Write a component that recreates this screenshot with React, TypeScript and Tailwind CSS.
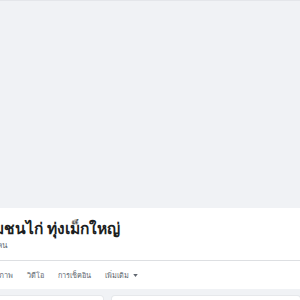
export default function App() {
  const tabs = [
    { label: 'รูปภาพ', cls: '-ml-[10px]' },
    { label: 'วิดีโอ', cls: '' },
    { label: 'การเช็คอิน', cls: '' },
  ];

  return (
    <div className="w-[300px] h-[300px] overflow-hidden bg-[#f0f2f5] font-['Noto_Sans','DejaVu_Sans',sans-serif]">
      {/* cover */}
      <div className="h-[208px] bg-[#f0f2f5] border-t border-[#e4e6ea]" />

      {/* header panel */}
      <div className="bg-white h-[81px] flex flex-col">
        <div className="h-[53px] pt-[9px] border-b border-[#dddfe2] whitespace-nowrap">
          <h1 className="-ml-[17px] text-[15.5px] leading-[23px] font-bold text-[#1c1e21]">
            ชุมชนไก่ ทุ่งเม็กใหญ่
          </h1>
          <p className="-ml-[57px] text-[8px] leading-[10px] text-[#606770]">
            ผู้ติดตาม 1,204 คน
          </p>
        </div>
        <div className="flex-1 flex items-center gap-[14px] text-[7.3px] text-[#606770] whitespace-nowrap">
          {tabs.map((t) => (
            <span key={t.label} className={t.cls}>
              {t.label}
            </span>
          ))}
          <span className="flex items-center gap-[4px]">
            เพิ่มเติม
            <svg width="5" height="3" viewBox="0 0 6 4">
              <path d="M0 0h6L3 4z" fill="#606770" />
            </svg>
          </span>
        </div>
      </div>

      {/* content cards */}
      <div className="flex gap-[9px] pt-[7px] -ml-[8px]">
        <div className="w-[111px] h-[40px] bg-white rounded-[3px] shadow-[0_0_0_1px_#e6e8eb]" />
        <div className="flex-1 h-[40px] bg-white rounded-[3px] shadow-[0_0_0_1px_#e6e8eb]" />
      </div>
    </div>
  );
}
